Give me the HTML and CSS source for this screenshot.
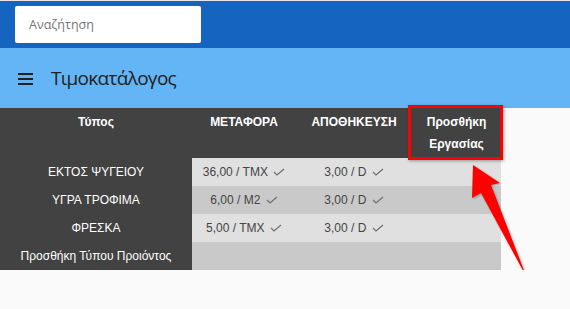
FILE: index.html
```html
<!DOCTYPE html>
<html lang="el">

<head>
    <meta charset="UTF-8">
    <title>Τιμοκατάλογος</title>
    <meta name="viewport" content="width=device-width, initial-scale=1.0" />
    <link rel="stylesheet" href="styles.css">
</head>

<body>
    <div class="topbar">
        <div class="search">Αναζήτηση</div>
    </div>

    <div class="titlebar">
        <span class="menu"><i></i><i></i><i></i></span>
        <h1>Τιμοκατάλογος</h1>
    </div>

    <div class="content">
        <table class="prices">
            <colgroup>
                <col class="c-type">
                <col class="c-move">
                <col class="c-store">
                <col class="c-add">
            </colgroup>
            <thead>
                <tr>
                    <th>Τύπος</th>
                    <th>ΜΕΤΑΦΟΡΑ</th>
                    <th>ΑΠΟΘΗΚΕΥΣΗ</th>
                    <th>Προσθήκη<br>Εργασίας</th>
                </tr>
            </thead>
            <tbody>
                <tr>
                    <th>ΕΚΤΟΣ ΨΥΓΕΙΟΥ</th>
                    <td>36,00 / TMX <svg class="ok" viewBox="0 0 12 8"><polyline points="1,4 4,7 11,1"/></svg></td>
                    <td>3,00 / D <svg class="ok" viewBox="0 0 12 8"><polyline points="1,4 4,7 11,1"/></svg></td>
                    <td></td>
                </tr>
                <tr>
                    <th>ΥΓΡΑ ΤΡΟΦΙΜΑ</th>
                    <td>6,00 / M2 <svg class="ok" viewBox="0 0 12 8"><polyline points="1,4 4,7 11,1"/></svg></td>
                    <td>3,00 / D <svg class="ok" viewBox="0 0 12 8"><polyline points="1,4 4,7 11,1"/></svg></td>
                    <td></td>
                </tr>
                <tr>
                    <th>ΦΡΕΣΚΑ</th>
                    <td>5,00 / TMX <svg class="ok" viewBox="0 0 12 8"><polyline points="1,4 4,7 11,1"/></svg></td>
                    <td>3,00 / D <svg class="ok" viewBox="0 0 12 8"><polyline points="1,4 4,7 11,1"/></svg></td>
                    <td></td>
                </tr>
                <tr>
                    <th>Προσθήκη Τύπου Προιόντος</th>
                    <td></td>
                    <td></td>
                    <td></td>
                </tr>
            </tbody>
        </table>

        <!-- annotation: highlight box + arrow -->
        <div class="highlight"></div>
        <svg class="arrow" viewBox="0 0 70 120">
            <polygon points="7,2 34,20 25,22 61,115 15,30 6,35" />
        </svg>
    </div>
</body>

</html>
```

FILE: styles.css
```css
body {
    margin: 0;
    background: #fafafa;
    font-family: "Liberation Sans", Arial, sans-serif;
}

.topbar {
    height: 42px;
    padding: 5px 15px 0;
    background: #1565c0;
    border-top: 1px solid #e6e6e6;
}

.search {
    width: 172px;
    height: 37px;
    padding-left: 14px;
    line-height: 37px;
    background: #fff;
    border-radius: 2px;
    font-family: "Open Sans", sans-serif;
    font-size: 12.5px;
    color: #757575;
}

.titlebar {
    height: 60px;
    background: #64b5f6;
    display: flex;
    align-items: center;
    padding-left: 18px;
}

.menu {
    display: flex;
    flex-direction: column;
    gap: 3px;
    width: 15px;
    margin-right: 18px;
    margin-top: 1px;
}

.menu i {
    display: block;
    height: 2px;
    background: #212121;
}

.titlebar h1 {
    margin: 0;
    font-family: "Open Sans", sans-serif;
    font-weight: normal;
    font-size: 19px;
    letter-spacing: -0.7px;
    color: #212121;
}

.content {
    position: relative;
}

.prices {
    border-collapse: collapse;
    table-layout: fixed;
    width: 501px;
    font-size: 12px;
}

.c-type {
    width: 192px;
}

.c-move {
    width: 104px;
}

.c-store {
    width: 116px;
}

.c-add {
    width: 89px;
}

.prices thead th {
    height: 44px;
    padding: 3px 0;
    line-height: 22px;
    vertical-align: top;
    background: #424242;
    color: #fff;
    font-weight: bold;
}

.prices tbody th,
.prices td {
    height: 28px;
    padding: 0;
    text-align: center;
}

.prices tbody th {
    background: #424242;
    color: #fff;
    font-weight: normal;
}

.prices td {
    color: #444;
    background: #e0e0e0;
}

.prices tbody tr:nth-child(even) td {
    background: #c9c9c9;
}

.ok {
    width: 12px;
    height: 8px;
    margin-left: 2px;
    fill: none;
    stroke: #6f6f6f;
    stroke-width: 1.2;
}

.highlight {
    position: absolute;
    left: 408px;
    top: -3px;
    width: 89px;
    height: 49px;
    border: 3px solid #f00;
    box-shadow: 1px 1px 3px rgba(0, 0, 0, 0.35);
}

.arrow {
    position: absolute;
    left: 466px;
    top: 55px;
    width: 70px;
    height: 120px;
    fill: #f00;
    filter: drop-shadow(1px 1px 1px rgba(0, 0, 0, 0.3));
}
```
